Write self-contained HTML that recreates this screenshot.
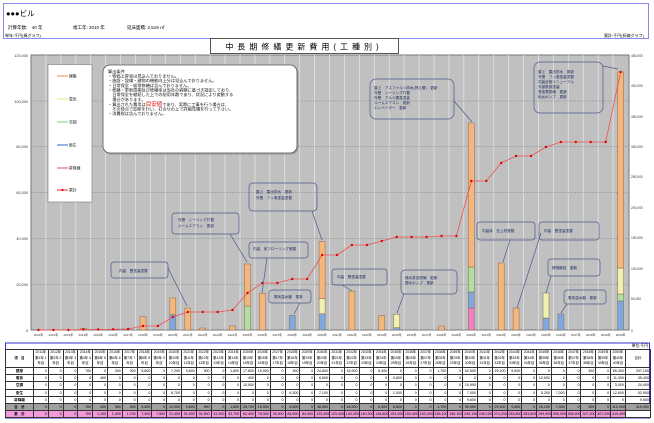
<!DOCTYPE html>
<html><head><meta charset="utf-8"><style>
body{margin:0;width:654px;height:423px;background:#fff;overflow:hidden;font-family:"Liberation Sans","Noto Sans CJK JP",sans-serif}
svg text{font-family:"Liberation Sans","Noto Sans CJK JP",sans-serif}
table{position:absolute;left:5px;top:349px;border-collapse:collapse;table-layout:fixed;width:645px;font-size:3.6px;font-family:"Liberation Sans","Noto Sans CJK JP",sans-serif}
td{border:0.5px solid #333;padding:0 1px;height:6.2px;line-height:6px;text-align:right;overflow:hidden;white-space:nowrap}
td.l{text-align:center;font-weight:bold}
tr.h td{text-align:center;line-height:5.5px;height:17px;white-space:normal;font-size:3.4px}
tr.g td{background:#a0a0a0}
tr.p td{background:#f49ad8}
</style></head><body>
<svg width="654" height="423" style="position:absolute;left:0;top:0">
<rect x="3.5" y="3.5" width="645" height="35" fill="#fff" stroke="#8888ee" stroke-width="1"/>
<text x="6" y="16" font-size="7.5">●●●ビル</text>
<text x="8" y="29" font-size="4.5">計算年数:　40 年</text>
<text x="73" y="29" font-size="4.5">竣工年: 2010 年</text>
<text x="127" y="29" font-size="4.5">延床面積: 2,519 ㎡</text>
<text x="5" y="37" font-size="4">単年:千円(棒グラフ)</text>
<text x="604" y="37" font-size="4">累計:千円(折線グラフ)</text>
<rect x="210.5" y="38.5" width="188" height="15" fill="#fff" stroke="#555"/>
<text x="304" y="49.5" font-size="8" text-anchor="middle" letter-spacing="4">中長期修繕更新費用(工種別)</text>
<!-- plot -->
<rect x="31" y="55" width="598" height="275" fill="#c0c0c0" stroke="#777" stroke-width="1"/>
<g stroke="#e4e4e4" stroke-width="0.8">
<path d="M45.9 55V330M60.9 55V330M75.8 55V330M90.7 55V330M105.6 55V330M120.6 55V330M135.5 55V330M150.4 55V330M165.3 55V330M180.3 55V330M195.2 55V330M210.1 55V330M225 55V330M240 55V330M254.9 55V330M269.8 55V330M284.7 55V330M299.7 55V330M314.6 55V330M329.5 55V330M344.4 55V330M359.4 55V330M374.3 55V330M389.2 55V330M404.1 55V330M419.1 55V330M434 55V330M448.9 55V330M463.8 55V330M478.8 55V330M493.7 55V330M508.6 55V330M523.5 55V330M538.5 55V330M553.4 55V330M568.3 55V330M583.2 55V330M598.2 55V330M613.1 55V330"/>
</g>
<g stroke="#888" stroke-width="0.6" stroke-dasharray="2 1">
<path d="M31 101H629M31 146.5H629M31 192.5H629M31 238.5H629M31 284.5H629"/>
</g>
<g font-size="3.8" fill="#333" text-anchor="end">
<text x="28" y="57">120,000</text><text x="28" y="103">100,000</text><text x="28" y="148">80,000</text><text x="28" y="194">60,000</text><text x="28" y="240">40,000</text><text x="28" y="286">20,000</text><text x="28" y="332">0</text>
</g>
<g font-size="3.3" fill="#333">
<text x="631" y="57">450,000</text><text x="631" y="87">400,000</text><text x="631" y="118">350,000</text><text x="631" y="148">300,000</text><text x="631" y="178">250,000</text><text x="631" y="209">200,000</text><text x="631" y="239">150,000</text><text x="631" y="270">100,000</text><text x="631" y="300">50,000</text><text x="631" y="332">0</text>
</g>
<g font-size="3" fill="#333" text-anchor="middle">
<text x="38.5" y="336">2011年</text><text x="53.4" y="336">2012年</text><text x="68.4" y="336">2013年</text><text x="83.3" y="336">2014年</text><text x="98.2" y="336">2015年</text><text x="113.1" y="336">2016年</text><text x="128.1" y="336">2017年</text><text x="143" y="336">2018年</text><text x="157.9" y="336">2019年</text><text x="172.8" y="336">2020年</text><text x="187.8" y="336">2021年</text><text x="202.7" y="336">2022年</text><text x="217.6" y="336">2023年</text><text x="232.5" y="336">2024年</text><text x="247.5" y="336">2025年</text><text x="262.4" y="336">2026年</text><text x="277.3" y="336">2027年</text><text x="292.2" y="336">2028年</text><text x="307.2" y="336">2029年</text><text x="322.1" y="336">2030年</text><text x="337" y="336">2031年</text><text x="351.9" y="336">2032年</text><text x="366.9" y="336">2033年</text><text x="381.8" y="336">2034年</text><text x="396.7" y="336">2035年</text><text x="411.6" y="336">2036年</text><text x="426.6" y="336">2037年</text><text x="441.5" y="336">2038年</text><text x="456.4" y="336">2039年</text><text x="471.3" y="336">2040年</text><text x="486.3" y="336">2041年</text><text x="501.2" y="336">2042年</text><text x="516.1" y="336">2043年</text><text x="531" y="336">2044年</text><text x="546" y="336">2045年</text><text x="560.9" y="336">2046年</text><text x="575.8" y="336">2047年</text><text x="590.7" y="336">2048年</text><text x="605.7" y="336">2049年</text><text x="620.6" y="336">2050年</text>
</g>
<!-- bars -->
<g stroke="#8a6a50" stroke-width="0.5">
<rect x="80.3" y="328.4" width="6" height="1.6" fill="#f4b67a"/>
<rect x="140" y="316.7" width="6" height="13.3" fill="#f4b67a"/>
<rect x="169.8" y="314.6" width="6" height="15.4" fill="#7fa8e0"/><rect x="169.8" y="298" width="6" height="16.6" fill="#f4b67a"/>
<rect x="184.8" y="308" width="6" height="22" fill="#f4b67a"/>
<rect x="199.7" y="328" width="6" height="2" fill="#f4b67a"/>
<rect x="229.5" y="326" width="6" height="4" fill="#f4b67a"/>
<rect x="244.5" y="306" width="6" height="24" fill="#b0e0a0"/><rect x="244.5" y="264" width="6" height="42" fill="#f4b67a"/>
<rect x="259.4" y="293.4" width="6" height="36.6" fill="#f4b67a"/>
<rect x="289.2" y="315.5" width="6" height="14.5" fill="#7fa8e0"/>
<rect x="319.1" y="313.7" width="6" height="16.3" fill="#7fa8e0"/><rect x="319.1" y="298.5" width="6" height="15.2" fill="#f0f0b0"/><rect x="319.1" y="241.5" width="6" height="57" fill="#f4b67a"/>
<rect x="348.9" y="291.1" width="6" height="38.9" fill="#f4b67a"/>
<rect x="378.8" y="315.5" width="6" height="14.5" fill="#f4b67a"/>
<rect x="393.7" y="327.7" width="6" height="2.3" fill="#7fa8e0"/><rect x="393.7" y="314.4" width="6" height="13.3" fill="#f0f0b0"/>
<rect x="438.5" y="326.1" width="6" height="3.9" fill="#f4b67a"/>
<rect x="468.3" y="308" width="6" height="22" fill="#f080c0"/><rect x="468.3" y="292" width="6" height="16" fill="#7fa8e0"/><rect x="468.3" y="267" width="6" height="25" fill="#b0e0a0"/><rect x="468.3" y="123" width="6" height="144" fill="#f4b67a"/>
<rect x="498.2" y="263" width="6" height="67" fill="#f4b67a"/>
<rect x="513.1" y="308" width="6" height="22" fill="#f4b67a"/>
<rect x="543" y="318" width="6" height="12" fill="#7fa8e0"/><rect x="543" y="293" width="6" height="25" fill="#f0f0b0"/>
<rect x="557.9" y="314" width="6" height="16" fill="#7fa8e0"/>
<rect x="617.6" y="301" width="6" height="29" fill="#7fa8e0"/><rect x="617.6" y="294" width="6" height="7" fill="#b0e0a0"/><rect x="617.6" y="268" width="6" height="26" fill="#f0f0b0"/><rect x="617.6" y="72" width="6" height="196" fill="#f4b67a"/>
</g>
<!-- line -->
<polyline fill="none" stroke="#f05050" stroke-width="0.8" points="38.5,330 53.4,330 68.4,330 83.3,329.5 98.2,329.5 113.1,329.3 128.1,329 143,326 157.9,326 172.8,317 187.8,312 202.7,312 217.6,312 232.5,310 247.5,293 262.4,283 277.3,283 292.2,279 307.2,279 322.1,255 337,255 351.9,245 366.9,245 381.8,241 396.7,237 411.6,237 426.6,237 441.5,236 456.4,236 471.3,181 486.3,181 501.2,163 516.1,156 531,156 546,147 560.9,142 575.8,142 590.7,142 605.7,142 620.6,72"/>
<g fill="#e00000">
<circle cx="38.5" cy="330" r="1.2"/><circle cx="53.4" cy="330" r="1.2"/><circle cx="68.4" cy="330" r="1.2"/><circle cx="83.3" cy="329.5" r="1.2"/><circle cx="98.2" cy="329.5" r="1.2"/><circle cx="113.1" cy="329.3" r="1.2"/><circle cx="128.1" cy="329" r="1.2"/><circle cx="143" cy="326" r="1.2"/><circle cx="157.9" cy="326" r="1.2"/><circle cx="172.8" cy="317" r="1.2"/><circle cx="187.8" cy="312" r="1.2"/><circle cx="202.7" cy="312" r="1.2"/><circle cx="217.6" cy="312" r="1.2"/><circle cx="232.5" cy="310" r="1.2"/><circle cx="247.5" cy="293" r="1.2"/><circle cx="262.4" cy="283" r="1.2"/><circle cx="277.3" cy="283" r="1.2"/><circle cx="292.2" cy="279" r="1.2"/><circle cx="307.2" cy="279" r="1.2"/><circle cx="322.1" cy="255" r="1.2"/><circle cx="337" cy="255" r="1.2"/><circle cx="351.9" cy="245" r="1.2"/><circle cx="366.9" cy="245" r="1.2"/><circle cx="381.8" cy="241" r="1.2"/><circle cx="396.7" cy="237" r="1.2"/><circle cx="411.6" cy="237" r="1.2"/><circle cx="426.6" cy="237" r="1.2"/><circle cx="441.5" cy="236" r="1.2"/><circle cx="456.4" cy="236" r="1.2"/><circle cx="471.3" cy="181" r="1.2"/><circle cx="486.3" cy="181" r="1.2"/><circle cx="501.2" cy="163" r="1.2"/><circle cx="516.1" cy="156" r="1.2"/><circle cx="531" cy="156" r="1.2"/><circle cx="546" cy="147" r="1.2"/><circle cx="560.9" cy="142" r="1.2"/><circle cx="575.8" cy="142" r="1.2"/><circle cx="590.7" cy="142" r="1.2"/><circle cx="605.7" cy="142" r="1.2"/><circle cx="620.6" cy="72" r="1.2"/>
</g>
<!-- legend -->
<rect x="48" y="64.5" width="44" height="137.5" fill="#fff" stroke="#777" stroke-width="0.6"/>
<g stroke-width="1.2">
<path d="M57 76H68" stroke="#f4a060"/><path d="M57 99H68" stroke="#e8e890"/><path d="M57 122H68" stroke="#90d890"/><path d="M57 145H68" stroke="#5080d0"/><path d="M57 168H68" stroke="#e060b0"/><path d="M57 190H68" stroke="#f05050"/>
</g>
<circle cx="62.5" cy="190" r="1.1" fill="#e00000"/>
<g font-size="3.8" fill="#222">
<text x="69" y="77.5">建築</text><text x="69" y="100.5">電気</text><text x="69" y="123.5">空調</text><text x="69" y="146.5">衛生</text><text x="69" y="169.5">昇降機</text><text x="69" y="191.5">累計</text>
</g>
<!-- info box -->
<rect x="104.5" y="66.5" width="194" height="88" rx="7" fill="#888" opacity="0.6"/>
<rect x="103" y="65" width="194" height="88" rx="7" fill="#fff" stroke="#555" stroke-width="0.8"/>
<g font-size="4.2" fill="#111">
<text x="108" y="73">算出条件</text>
<text x="108" y="77.5">・物価上昇率は見込んでおりません。</text>
<text x="108" y="82">・施設・設備・建物の機能向上分は見込んでおりません。</text>
<text x="108" y="87">・日常保全・経常修繕は含んでおりません。</text>
<text x="108" y="91.5">・修繕・更新周期及び修繕率は当社の経験に基づき設定しており、</text>
<text x="108" y="96">　日常保全を継続した上での耐用年数であり、状況により変動する</text>
<text x="108" y="101">　場合があります。</text>
<text x="108" y="106">・算出された費用は<tspan fill="#e00000" font-size="5.5">目安値</tspan>であり、実際に工事を行う場合は、</text>
<text x="108" y="110.5">　その時点で診断を行い、打合せの上で詳細見積を行って下さい。</text>
<text x="108" y="115">・消費税は含んでおりません。</text>
</g>
<!-- callouts -->
<g fill="none" stroke="#4a5a88" stroke-width="0.7">
<rect x="111" y="262" width="57" height="16" rx="3"/><path d="M168 268L187 306"/>
<rect x="172" y="213" width="67" height="21" rx="3"/><path d="M230 234L247 262"/>
<rect x="249" y="183" width="68" height="28" rx="4"/><path d="M312 211L322 240"/>
<rect x="249" y="242" width="59" height="16" rx="3"/><path d="M267 258L262 293"/>
<rect x="269" y="290" width="42" height="13" rx="3"/><path d="M300 303L294 314"/>
<rect x="332" y="269" width="55" height="16" rx="3"/><path d="M342 285L352 291"/>
<rect x="401" y="270" width="56" height="24" rx="4"/><path d="M404 294L397 313"/>
<rect x="370" y="79" width="84" height="40" rx="6"/><path d="M454 101L472 122"/>
<rect x="477" y="222" width="58" height="18" rx="3"/><path d="M510 240L503 262"/>
<rect x="539" y="222" width="60" height="18" rx="3"/><path d="M541 233L517 308"/>
<rect x="548" y="259" width="52" height="17" rx="3"/><path d="M551 276L546 293"/>
<rect x="564" y="290" width="42" height="14" rx="3"/><path d="M567 304L561 313"/>
<rect x="534" y="62" width="69" height="51" rx="6"/><path d="M603 66L618 69"/>
</g>
<g font-size="3.6" fill="#1a2a60">
<text x="119" y="272">内装　壁塗装塗替</text>
<text x="178" y="221">外壁　シーリング打替</text><text x="178" y="227">ルームエアコン　更新</text>
<text x="256" y="193">屋上　露出防水　更新</text><text x="256" y="199">外壁　フッ素塗装塗替</text>
<text x="253" y="250">内装　床フローリング張替</text>
<text x="274" y="298">電気温水器　更新</text>
<text x="337" y="278">内装　壁塗装塗替</text>
<text x="405" y="279">揚水泵送設備　更新</text><text x="405" y="284">揚水ポンプ　更新</text>
<text x="374" y="89">屋上　アスファルト防水(押え層)　更新</text><text x="374" y="94">外壁　シーリング打替</text><text x="374" y="99">外壁　アルミ建具塗装</text><text x="374" y="104">ルームエアコン　更新</text><text x="374" y="109">エレベーター　更新</text>
<text x="482" y="232">内装床　仕上材張替</text>
<text x="544" y="232">内装　壁塗装塗替</text>
<text x="552" y="269">照明器具　更新</text>
<text x="568" y="299">電気温水器　更新</text>
<text x="538" y="73">屋上　露出防水　更新</text><text x="538" y="78">外壁　フッ素塗装塗替</text><text x="538" y="83">内装全般リニューアル</text><text x="538" y="88">外部鉄部塗装</text><text x="538" y="93">受変電設備　更新</text><text x="538" y="98">給水ポンプ　更新</text>
</g>
<text x="648" y="347" font-size="3.8" text-anchor="end">単位:千円</text>
<rect x="5.5" y="343" width="644" height="75" fill="none" stroke="#3333cc" stroke-width="1"/>
</svg>
<table>
<colgroup><col style="width:28px"><col span="40" style="width:14.8px"><col style="width:25px"></colgroup>
<tr class="h"><td class="l">項　目</td><td>2011年 第1年 1年目</td><td>2012年 第2年 2年目</td><td>2013年 第3年 3年目</td><td>2014年 第4年 4年目</td><td>2015年 第5年 5年目</td><td>2016年 第6年 6年目</td><td>2017年 第7年 7年目</td><td>2018年 第8年 8年目</td><td>2019年 第9年 9年目</td><td>2020年 第10年 10年目</td><td>2021年 第11年 11年目</td><td>2022年 第12年 12年目</td><td>2023年 第13年 13年目</td><td>2024年 第14年 14年目</td><td>2025年 第15年 15年目</td><td>2026年 第16年 16年目</td><td>2027年 第17年 17年目</td><td>2028年 第18年 18年目</td><td>2029年 第19年 19年目</td><td>2030年 第20年 20年目</td><td>2031年 第21年 21年目</td><td>2032年 第22年 22年目</td><td>2033年 第23年 23年目</td><td>2034年 第24年 24年目</td><td>2035年 第25年 25年目</td><td>2036年 第26年 26年目</td><td>2037年 第27年 27年目</td><td>2038年 第28年 28年目</td><td>2039年 第29年 29年目</td><td>2040年 第30年 30年目</td><td>2041年 第31年 31年目</td><td>2042年 第32年 32年目</td><td>2043年 第33年 33年目</td><td>2044年 第34年 34年目</td><td>2045年 第35年 35年目</td><td>2046年 第36年 36年目</td><td>2047年 第37年 37年目</td><td>2048年 第38年 38年目</td><td>2049年 第39年 39年目</td><td>2050年 第40年 40年目</td><td>合計</td></tr>
<tr><td class="l">建築</td><td>0</td><td>0</td><td>0</td><td>700</td><td>0</td><td>300</td><td>300</td><td>5,800</td><td>0</td><td>7,200</td><td>9,600</td><td>900</td><td>0</td><td>1,800</td><td>17,800</td><td>15,900</td><td>0</td><td>300</td><td>0</td><td>24,800</td><td>0</td><td>16,900</td><td>0</td><td>6,300</td><td>0</td><td>0</td><td>0</td><td>1,700</td><td>0</td><td>62,500</td><td>0</td><td>29,100</td><td>9,600</td><td>0</td><td>0</td><td>0</td><td>0</td><td>300</td><td>0</td><td>85,300</td><td>297,100</td></tr>
<tr><td class="l">電気</td><td>0</td><td>0</td><td>0</td><td>0</td><td>400</td><td>0</td><td>0</td><td>0</td><td>0</td><td>0</td><td>0</td><td>0</td><td>0</td><td>0</td><td>400</td><td>0</td><td>0</td><td>0</td><td>0</td><td>6,600</td><td>0</td><td>0</td><td>0</td><td>0</td><td>5,800</td><td>0</td><td>0</td><td>0</td><td>0</td><td>0</td><td>0</td><td>0</td><td>0</td><td>0</td><td>10,900</td><td>0</td><td>0</td><td>0</td><td>0</td><td>11,300</td><td>35,400</td></tr>
<tr><td class="l">空調</td><td>0</td><td>0</td><td>0</td><td>0</td><td>0</td><td>0</td><td>0</td><td>0</td><td>0</td><td>0</td><td>0</td><td>0</td><td>0</td><td>0</td><td>10,500</td><td>0</td><td>0</td><td>0</td><td>0</td><td>0</td><td>0</td><td>0</td><td>0</td><td>0</td><td>0</td><td>0</td><td>0</td><td>0</td><td>0</td><td>10,900</td><td>0</td><td>0</td><td>0</td><td>0</td><td>0</td><td>0</td><td>0</td><td>0</td><td>0</td><td>3,000</td><td>24,400</td></tr>
<tr><td class="l">衛生</td><td>0</td><td>0</td><td>0</td><td>0</td><td>0</td><td>0</td><td>0</td><td>0</td><td>0</td><td>6,700</td><td>0</td><td>0</td><td>0</td><td>0</td><td>0</td><td>0</td><td>0</td><td>6,300</td><td>0</td><td>7,100</td><td>0</td><td>0</td><td>0</td><td>0</td><td>1,000</td><td>0</td><td>0</td><td>0</td><td>0</td><td>7,000</td><td>0</td><td>0</td><td>0</td><td>0</td><td>5,200</td><td>7,000</td><td>0</td><td>0</td><td>0</td><td>12,600</td><td>52,900</td></tr>
<tr><td class="l">昇降機</td><td>0</td><td>0</td><td>0</td><td>0</td><td>0</td><td>0</td><td>0</td><td>0</td><td>0</td><td>0</td><td>0</td><td>0</td><td>0</td><td>0</td><td>0</td><td>0</td><td>0</td><td>0</td><td>0</td><td>0</td><td>0</td><td>0</td><td>0</td><td>0</td><td>0</td><td>0</td><td>0</td><td>0</td><td>0</td><td>9,600</td><td>0</td><td>0</td><td>0</td><td>0</td><td>0</td><td>0</td><td>0</td><td>0</td><td>0</td><td>0</td><td>9,600</td></tr>
<tr class="g"><td class="l">合　計</td><td>0</td><td>0</td><td>0</td><td>700</td><td>400</td><td>300</td><td>300</td><td>5,800</td><td>0</td><td>13,900</td><td>9,600</td><td>900</td><td>0</td><td>1,800</td><td>28,700</td><td>15,900</td><td>0</td><td>6,600</td><td>0</td><td>38,500</td><td>0</td><td>16,900</td><td>0</td><td>6,300</td><td>6,800</td><td>0</td><td>0</td><td>1,700</td><td>0</td><td>90,000</td><td>0</td><td>29,100</td><td>9,600</td><td>0</td><td>16,100</td><td>7,000</td><td>0</td><td>300</td><td>0</td><td>112,200</td><td>419,400</td></tr>
<tr class="p"><td class="l">累　計</td><td>0</td><td>0</td><td>0</td><td>700</td><td>1,100</td><td>1,400</td><td>1,700</td><td>7,500</td><td>7,500</td><td>21,400</td><td>31,000</td><td>31,900</td><td>31,900</td><td>33,700</td><td>62,400</td><td>78,300</td><td>78,300</td><td>84,900</td><td>84,900</td><td>123,400</td><td>123,400</td><td>140,300</td><td>140,300</td><td>146,600</td><td>153,400</td><td>153,400</td><td>153,400</td><td>155,100</td><td>155,100</td><td>245,100</td><td>245,100</td><td>274,200</td><td>283,800</td><td>283,800</td><td>299,900</td><td>306,900</td><td>306,900</td><td>307,200</td><td>307,200</td><td>419,400</td><td style="background:#fff"></td></tr>
</table>
</body></html>
